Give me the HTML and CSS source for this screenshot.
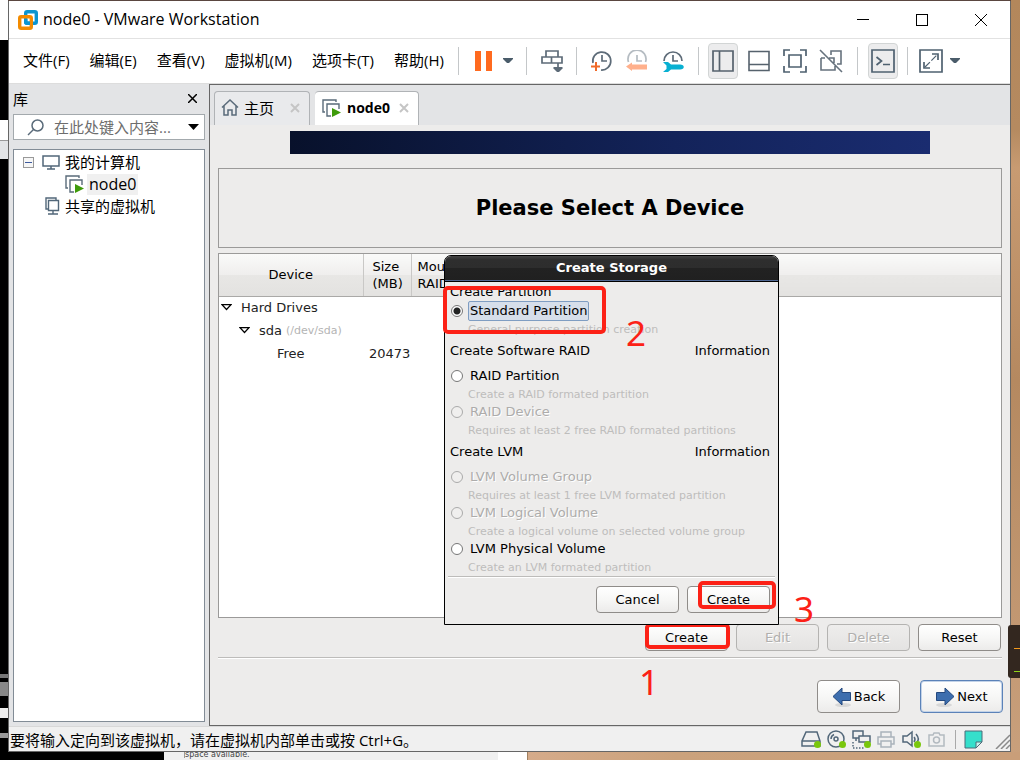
FILE: index.html
```html
<!DOCTYPE html>
<html lang="zh-CN">
<head>
<meta charset="utf-8">
<title>node0 - VMware Workstation</title>
<link rel="stylesheet" href="styles.css">
</head>
<body>
<div class="desktop">
  <div class="edge-top"></div>
  <div class="edge-left"></div>
  <div class="edge-right"></div>
  <div class="edge-bottom">
    <div class="strip-black"></div><div class="strip-light"><span>space available.</span></div><div class="strip-white"></div><div class="strip-wood"></div>
  </div>

  <div class="window">
    <header class="titlebar">
      <svg class="logo" width="20" height="20" viewBox="0 0 20 20" fill="none" stroke-width="3.4"><rect x="7.7" y="1.7" width="10.6" height="11.6" rx="1.5" stroke="#0b95d0"/><rect x="1.7" y="6.7" width="11.6" height="11.6" rx="1.5" stroke="#f38b00"/><path d="M7.7 9v2.8a1.5 1.5 0 0 0 1.5 1.5H12" stroke="#0b95d0"/></svg>
      <h1>node0 - VMware Workstation</h1>
      <div class="window-controls">
        <button type="button" aria-label="最小化"><svg width="14" height="14" stroke="#000"><path d="M1 6.5h12"/></svg></button>
        <button type="button" aria-label="最大化"><svg width="14" height="14" stroke="#000" fill="none"><rect x="1.5" y="1.5" width="11" height="11"/></svg></button>
        <button type="button" aria-label="关闭"><svg width="14" height="14" stroke="#000"><path d="M1 1l12 12M13 1L1 13"/></svg></button>
      </div>
    </header>

    <div class="menubar">
      <nav class="menus">
        <button type="button">文件(F)</button><button type="button">编辑(E)</button><button type="button">查看(V)</button><button type="button">虚拟机(M)</button><button type="button">选项卡(T)</button><button type="button">帮助(H)</button>
      </nav>
      <div class="tools">
        <div class="group pause">
          <button type="button" aria-label="暂停"><svg width="18" height="22"><path d="M0 1h6v20H0zM11 1h6v20h-6z" fill="#ff6a1f"/></svg></button>
          <button type="button" class="drop" aria-label="电源选项"><svg width="10" height="6"><path d="M0 0h10v1L6 5H4L0 1z" fill="#4a5c6a"/></svg></button>
        </div>
        <div class="group single">
          <button type="button" aria-label="发送 Ctrl+Alt+Del"><svg width="22" height="22" viewBox="0 0 22 22" fill="none" stroke="#5d6b78" stroke-width="1.7"><path d="M5 1h12v6H5zM1 7h9.5v6H1zM10.500 7H21v6H10.500z"/><path d="M17 13v6"/><path d="M12.500 17h9v1.500L18 22h-2l-3.500-3.500z" fill="#5d6b78" stroke="none"/></svg></button>
        </div>
        <div class="group clocks">
          <button type="button" aria-label="拍摄快照"><svg width="22" height="22" viewBox="0 0 22 22" fill="none" stroke="#5d6b78" stroke-width="1.7"><path d="M3 13A9 9 0 1 1 11 20M12 5v6h5"/><path d="M6 12v9M1 16.500h9" stroke="#f06a2a" stroke-width="2"/></svg></button>
          <button type="button" aria-label="恢复快照"><svg width="22" height="22" viewBox="0 0 22 22" fill="none" stroke="#b5bcc2" stroke-width="1.7"><path d="M2.500 12a9 9 0 1 1 17 0M11 5v6h5"/><path d="M0 16.500l6-4v2h15v5H6v1.500z" fill="#ffb08c" stroke="none"/></svg></button>
          <button type="button" aria-label="管理快照"><svg width="22" height="22" viewBox="0 0 22 22" fill="none" stroke="#5d6b78" stroke-width="1.7"><path d="M2 11a9 9 0 0 1 18 0M11 5v6h5"/><path d="M1 12h5l3 2.500h9c5 0 5 5 0 5H9L6 22H1l3.500-3v-3.500z" fill="#08b0d2" stroke="none"/></svg></button>
        </div>
        <div class="group views">
          <button type="button" class="on" aria-label="显示库"><svg width="22" height="22" fill="none" stroke="#56626d" stroke-width="1.700"><path d="M1 1h20v20H1zM7.500 1v20"/></svg></button>
          <button type="button" aria-label="缩略图栏"><svg width="22" height="22" fill="none" stroke="#56626d" stroke-width="1.600"><path d="M1 1.500h20v19H1zM1 14.500h20"/></svg></button>
          <button type="button" aria-label="全屏"><svg width="24" height="24" fill="none" stroke="#4f6170" stroke-width="1.700"><path d="M1 7V1h6M17 1h6v6M23 17v6h-6M7 23H1v-6"/><path d="M6 6h12v12H6z"/></svg></button>
          <button type="button" aria-label="Unity"><svg width="24" height="24" fill="none" stroke="#66727d" stroke-width="1.600"><path d="M12 6V2h10v13h-4M2 9v12h14v-4M2 9h4M10 9h5v5M1 1l22 22"/></svg></button>
        </div>
        <div class="group single">
          <button type="button" class="on" aria-label="控制台视图"><svg width="24" height="24" fill="none" stroke="#4f6170" stroke-width="1.700"><path d="M1 1h22v22H1zM5.500 8l5 4-5 4M12 15.500h7"/></svg></button>
        </div>
        <div class="group full">
          <button type="button" aria-label="自由拉伸"><svg width="24" height="24" fill="none" stroke="#4f6170" stroke-width="1.700"><path d="M1 1h22v22H1zM13 5h6v6M5 13v6h6"/><path d="M6 18L18 6" stroke-width="1.200" stroke-dasharray="7 2"/></svg></button>
          <button type="button" class="drop" aria-label="拉伸选项"><svg width="10" height="6"><path d="M0 0h10v1L6 5H4L0 1z" fill="#4a5c6a"/></svg></button>
        </div>
      </div>
    </div>

    <div class="workspace">
      <aside class="library">
        <div class="library-head"><h2>库</h2><button type="button" aria-label="关闭库"><svg width="9" height="9" stroke="#000" stroke-width="1.500"><path d="M0 0l9 9M9 0L0 9"/></svg></button></div>
        <div class="search">
          <svg width="17" height="17" fill="none" stroke="#5a6b7a" stroke-width="1.500"><circle cx="10.500" cy="6.500" r="5.500"/><path d="M6.500 10.500L1 16"/></svg>
          <input type="text" aria-label="搜索" placeholder="在此处键入内容...">
          <button type="button" aria-label="搜索选项"><svg width="11" height="6"><path d="M0 0h11L5.500 6z"/></svg></button>
        </div>
        <ul class="tree">
          <li><svg width="11" height="11"><rect x=".5" y=".5" width="10" height="10" fill="#f6f6f6" stroke="#999"/><path d="M2 5.500h7" stroke="#3d5a9e"/></svg><svg class="pc" width="18" height="15" fill="none" stroke="#526779" stroke-width="1.500"><path d="M1 1h16v10H1zM9 11v3M5 14h8"/></svg><span>我的计算机</span></li>
          <li class="child"><svg width="19" height="18" fill="none" stroke="#5a6b7a" stroke-width="1.400"><path d="M3 13H1V1h13v2"/><path d="M9 17H5V5h12v5"/><path d="M10 9l9 4.500-9 4.500z" fill="#3f9b0b" stroke="none"/></svg><span class="picked">node0</span></li>
          <li class="shared"><svg width="15" height="18" fill="none" stroke="#526779" stroke-width="1.400"><path d="M3 12H1V1h10v2M3.500 3.500h10v10h-10zM8 14v3M3 17h10"/></svg><span>共享的虚拟机</span></li>
        </ul>
      </aside>

      <main class="console">
        <div class="tabs">
          <button type="button" class="tab home"><svg width="18" height="17" fill="none" stroke="#5a6b7a" stroke-width="1.500"><path d="M1 8.500L9 1l8 7.500M3 7v9h4v-5h4v5h4V7"/></svg><span>主页</span><svg class="x" width="10" height="10"><path d="M1 1l8 8M9 1L1 9"/></svg></button>
          <button type="button" class="tab current"><svg width="19" height="18" fill="none" stroke="#5a6b7a" stroke-width="1.400"><path d="M3 13H1V1h13v2"/><path d="M9 17H5V5h12v5"/><path d="M10 9l9 4.500-9 4.500z" fill="#3f9b0b" stroke="none"/></svg><span>node0</span><svg class="x" width="10" height="10"><path d="M1 1l8 8M9 1L1 9"/></svg></button>
        </div>

        <div class="guest">
          <div class="banner"></div>
          <h2 class="heading">Please Select A Device</h2>
          <div class="devices">
            <table>
              <colgroup><col class="c-device"><col class="c-size"><col></colgroup>
              <thead><tr><th class="mid">Device</th><th>Size<br>(MB)</th><th>Mount Point/<br>RAID/Volume</th></tr></thead>
              <tbody>
                <tr><td><span class="lv1"><svg width="11" height="7"><path d="M1 .7h9L5.500 5.500z"/></svg>Hard Drives</span></td><td></td><td></td></tr>
                <tr><td><span class="lv2"><svg width="11" height="7"><path d="M1 .7h9L5.500 5.500z"/></svg>sda <small>(/dev/sda)</small></span></td><td></td><td></td></tr>
                <tr><td><span class="lv3">Free</span></td><td>20473</td><td></td></tr>
              </tbody>
            </table>
          </div>
          <div class="actions">
            <span class="marked"><button type="button" class="gtk">Create</button><i class="mark mark-1"></i><b class="num num-1">1</b></span>
            <button type="button" class="gtk" disabled>Edit</button>
            <button type="button" class="gtk" disabled>Delete</button>
            <button type="button" class="gtk">Reset</button>
          </div>
          <div class="wizard">
            <button type="button" class="gtk"><svg width="20" height="20"><ellipse cx="11" cy="18" rx="8" ry="2" fill="#d8d8d8"/><path d="M1 9.500l9-8.500v4.500h8.500v8H10V18z" fill="#3d6eae" stroke="#24497f"/></svg>Back</button>
            <button type="button" class="gtk next"><svg width="20" height="20"><ellipse cx="9" cy="18" rx="8" ry="2" fill="#d8d8d8"/><path d="M19 9.500L10 1v4.500H1.500v8H10V18z" fill="#3d6eae" stroke="#24497f"/></svg>Next</button>
          </div>

          <form class="dialog" role="dialog" aria-label="Create Storage">
            <div class="dialog-title">Create Storage</div>
            <div class="dialog-body">
              <div class="section first">Create Partition</div>
              <label class="opt"><input type="radio" name="kind" checked><span class="focus">Standard Partition</span></label>
              <p>General purpose partition creation</p>
              <div class="section"><span>Create Software RAID</span><span>Information</span></div>
              <label class="opt"><input type="radio" name="kind"><span>RAID Partition</span></label>
              <p>Create a RAID formated partition</p>
              <label class="opt"><input type="radio" name="kind" disabled><span>RAID Device</span></label>
              <p>Requires at least 2 free RAID formated partitions</p>
              <div class="section"><span>Create LVM</span><span>Information</span></div>
              <label class="opt"><input type="radio" name="kind" disabled><span>LVM Volume Group</span></label>
              <p>Requires at least 1 free LVM formated partition</p>
              <label class="opt"><input type="radio" name="kind" disabled><span>LVM Logical Volume</span></label>
              <p>Create a logical volume on selected volume group</p>
              <label class="opt"><input type="radio" name="kind"><span>LVM Physical Volume</span></label>
              <p>Create an LVM formated partition</p>
            </div>
            <div class="dialog-foot">
              <button type="button" class="gtk">Cancel</button>
              <span class="marked"><button type="button" class="gtk">Create</button><i class="mark mark-3"></i><b class="num num-3">3</b></span>
            </div>
            <i class="mark mark-2"></i><b class="num num-2">2</b>
          </form>
        </div>
      </main>
    </div>

    <footer class="status">
      <span class="message">要将输入定向到该虚拟机，请在虚拟机内部单击或按 Ctrl+G。</span>
      <div class="devices-tray">
        <svg width="21" height="19" fill="none" stroke="#526779" stroke-width="1.500"><path d="M5 2h11l3 9v5H1v-5zM1 11h18"/><circle cx="16.500" cy="14.500" r="3.500" fill="#7ac70c" stroke="none"/></svg>
        <svg width="21" height="19" fill="none" stroke="#526779" stroke-width="1.500"><circle cx="10" cy="9" r="8"/><circle cx="10" cy="9" r="2"/><path d="M5 9a5 5 0 0 1 3-4.500"/><circle cx="16.500" cy="14.500" r="3.500" fill="#7ac70c" stroke="none"/></svg>
        <svg width="21" height="19" fill="none" stroke="#526779" stroke-width="1.500"><path d="M8 8H2V1h10v5M8 6h11v6H8zM5 8v3"/><path d="M2 12v6h12" stroke-dasharray="1.500 1.500"/><circle cx="16.500" cy="14.500" r="3.500" fill="#7ac70c" stroke="none"/></svg>
        <svg width="21" height="19" fill="none" stroke="#a9b2ba" stroke-width="1.500"><path d="M5 7V2h10v5M5 14H2V7h16v7h-3M5 11h10v6H5z"/></svg>
        <svg width="21" height="19" fill="none" stroke="#526779" stroke-width="1.500"><path d="M2 6h4l5-4v14l-5-4H2zM13 7q2 2 0 5M15 4q4 5 1 8"/><circle cx="16.500" cy="14.500" r="3.500" fill="#7ac70c" stroke="none"/></svg>
        <svg width="21" height="19" fill="none" stroke="#b3bac0" stroke-width="1.500"><path d="M3 5h4l1-2h5l1 2h4v11H3z"/><circle cx="10.500" cy="10" r="3"/></svg>
        <div class="note"><svg width="19" height="19"><path d="M1 1h17v11l-6 6H1z" fill="#35dfcb" stroke="#4c6b78"/><path d="M18 12h-6v6z" fill="#c7f5ef" stroke="#4c6b78"/></svg></div>
        <svg class="grip" width="15" height="15" stroke="#8a8a8a" stroke-width="1.500"><path d="M1 15L15 1M6 15l9-9M11 15l4-4"/></svg>
      </div>
    </footer>
  </div>
  <div class="gauge"></div>
</div>
</body>
</html>
```
FILE: styles.css
```css
* { box-sizing: border-box; }
body { margin: 0; font-family: "Open Sans", "Noto Sans CJK SC", sans-serif; font-size: 15px; color: #000; }
button { font: inherit; color: inherit; border: 0; background: none; padding: 0; }
h1, h2, p, ul { margin: 0; padding: 0; font-weight: normal; list-style: none; }
svg { flex: none; display: block; }

/* Desktop behind the window */
.desktop { position: relative; height: 100vh; min-height: 760px; display: grid; grid-template: 1px 1fr 8px / 8px 1fr 9px; overflow: hidden; }
.edge-top { grid-area: 1 / 1 / 2 / 4; background: #5a4640; }
.edge-left { grid-area: 1 / 1 / 3 / 2; background: linear-gradient(#fff 40px, #000 40px 120px, #fff 120px 140px, #999 140px 141px, #e2e4e6 141px 159px, #000 159px 674px, #777 674px 678px, #000 678px 682px, #888 682px 696px, #000 696px 708px, #eee 708px 718px, #000 718px 733px, #999 733px 738px, #000 738px); }
.edge-right { grid-area: 1 / 3 / 4 / 4; background: linear-gradient(#b3875b, #b58a60 17%, #c89b72 22%, #b58960 50%, #c9a07c); }
.edge-bottom { grid-area: 3 / 1 / 4 / 4; display: flex; overflow: hidden; }
.strip-black { width: 164px; background: #000; }
.strip-light { width: 334px; background: #f0f0f0; padding-left: 20px; font: 8px/6px "DejaVu Sans", sans-serif; color: #444; overflow: hidden; }
.strip-light span { display: block; border-left: 1px solid #999; }
.strip-white { width: 30px; background: #fff; border-right: 1px solid #a08060; }
.strip-wood { flex: 1; background: linear-gradient(90deg, #d5ab8a, #cba27c 30%, #c99e79); }
.gauge { position: absolute; right: 0; top: 625px; width: 12px; height: 53px; border-radius: 3px 0 0 3px; background: linear-gradient(transparent 23px, #f39a1d 23px 24px, transparent 24px 46px, #8fd31b 46px 47px, transparent 47px) 6px 0 no-repeat, #33271f; }

/* Window frame */
.window { grid-area: 2 / 2 / 3 / 3; display: flex; flex-direction: column; min-width: 0; border: 1px solid #666; border-top: 0; background: #fff; }
.titlebar { display: flex; align-items: center; height: 38px; padding-left: 9px; border-bottom: 1px solid #e2e2e2; }
.titlebar h1 { flex: 1; margin-left: 5px; font-size: 16px; line-height: 20px; padding-bottom: 1px; }
.window-controls { display: flex; }
.window-controls button { width: 59px; display: grid; place-items: center; }

.menubar { display: flex; height: 45px; border-bottom: 1px solid #ddd; }
.menus { display: flex; align-items: center; gap: 20px; width: 449px; padding-left: 14px; padding-bottom: 4px; }
.menus button { white-space: nowrap; }
.tools { display: flex; align-items: center; }
.group { display: flex; align-items: center; height: 28px; border-left: 1px solid #c4c7c9; }
.group button { display: grid; place-items: center; width: 30px; height: 36px; margin: 0 3px; border-radius: 4px; }
.group .on { background: #ececed; border: 1px solid #d2d5d5; }
.group .drop { width: 12px; margin: 0; }
.pause { width: 68px; padding-left: 7px; }
.single { width: 50px; justify-content: center; }
.clocks { width: 122px; padding-left: 6px; }
.views { width: 159px; padding-left: 6px; }
.full { padding-left: 5px; }

.workspace { flex: 1; display: flex; min-height: 0; background: #e3e4e6; }

/* Library */
.library { width: 200px; padding: 0 4px 4px; display: flex; flex-direction: column; }
.library-head { display: flex; align-items: center; justify-content: space-between; height: 30px; padding-right: 8px; padding-bottom: 2px; }
.library-head h2 { font-size: 15px; }
.search { display: flex; align-items: center; height: 26px; padding-left: 13px; padding-right: 5px; border: 1px solid #a3a9ad; background: #fff; }
.search input { flex: 1; min-width: 0; margin-left: 10px; padding: 0; border: 0; outline: 0; font: inherit; background: none; }
.search input::placeholder { color: #6d6d6d; opacity: 1; }
.tree { flex: 1; margin-top: 9px; padding-top: 1px; border: 1px solid #828c96; background: #fff; }
.tree li { display: flex; align-items: center; height: 22px; padding-left: 9px; }
.tree .pc { margin-left: 8px; }
.tree span { margin-left: 5px; line-height: 21px; }
.tree .child { padding-left: 51px; }
.tree .child span { margin-left: 3px; padding: 0 2px; font-size: 16px; }
.tree .shared { padding-left: 31px; }
.picked { background: #f0f0f0; }

/* Console tabs */
.console { flex: 1; min-width: 0; display: flex; flex-direction: column; border: 1px solid #666; border-right: 0; }
.tabs { display: flex; align-items: flex-end; gap: 5px; height: 40px; padding-left: 4px; }
.tab { display: flex; align-items: center; height: 34px; padding-left: 7px; padding-bottom: 2px; border: 1px solid #b0b3b6; border-bottom: 0; border-radius: 4px 4px 0 0; background: #e9eaec; }
.home { width: 96px; }
.tab span { flex: 1; margin-left: 6px; text-align: left; }
.home span { margin-left: 5px; }
.home { padding-left: 6px; }
.current { width: 104px; border-left: 0; background: #fff; font-weight: bold; font-size: 14px; }
.tab .x { margin-right: 9px; stroke: #c5c5c5; stroke-width: 2; }

/* Guest screen */
.guest { position: relative; flex: 1; display: flex; flex-direction: column; padding: 6px 8px 12px; background: #edeceb; font-family: "DejaVu Sans", sans-serif; font-size: 13px; }
.banner { flex: none; height: 23px; margin: 0 72px; background: linear-gradient(90deg, #08112b, #13235a 60%, #1a2c70); }
.heading { display: grid; place-items: center; flex: none; height: 80px; margin-top: 14px; border: 1px solid #9b9a99; font-size: 21px; font-weight: bold; }
.devices { flex: 1; margin-top: 5px; border: 1px solid #9b9a99; background: #fff; }
table { width: 100%; table-layout: fixed; border-collapse: collapse; }
.c-device { width: 144px; }
.c-size { width: 48px; }
th { height: 42px; padding: 0 6px 0 9px; font-weight: normal; text-align: left; line-height: 17px; background: linear-gradient(#fafaf9, #efeeed 50%, #e8e7e5 50%, #e3e2e0); border-bottom: 1px solid #aaa9a7; border-right: 1px solid #c9c8c6; }
th:last-child { padding-left: 6px; border-right: 0; }
th.mid { text-align: center; padding: 0; }
td { height: 23px; padding: 0; color: #222; }
td + td { padding-left: 6px; }
td span { display: flex; align-items: center; }
td svg { fill: #fff; stroke: #000; stroke-width: 1.2; }
.lv1 { padding-left: 2px; gap: 9px; }
.lv2 { padding-left: 20px; gap: 9px; }
.lv3 { padding-left: 58px; }
.lv2 small { margin-left: -5px; font-size: 11px; color: #b4b4b4; }

.gtk { width: 83px; height: 27px; display: flex; align-items: center; justify-content: center; border: 1px solid #8f8c89; border-radius: 4px; background: linear-gradient(#fff, #f7f7f6 50%, #ecebea); }
.gtk:disabled { color: #b0afad; text-shadow: 1px 1px #fff; border-color: #b4b3b1; background: linear-gradient(#eeedec, #e4e3e2); }
.marked { position: relative; }
.actions { display: flex; justify-content: flex-end; gap: 8px; padding: 6px 1px 6px 0; border-bottom: 1px solid #bdbcba; box-shadow: 0 1px #fff; }
.wizard { display: flex; justify-content: flex-end; gap: 20px; margin-top: 22px; margin-right: -1px; }
.wizard .gtk { height: 33px; gap: 2px; }
.wizard .next { border-color: #5b82b8; box-shadow: inset 0 0 0 1px #c3d3e8; }

/* Create Storage dialog */
.dialog { position: absolute; left: calc(50% - 166px); top: 130px; width: 335px; border: 1px solid #000; border-radius: 7px 7px 0 0; background: #edeceb; }
.dialog-title { height: 26px; line-height: 24px; text-align: center; font-weight: bold; color: #fff; background: linear-gradient(#444, #2e2e2e 15%, #2d2d2d 50%, #222 50%, #202020); border-bottom: 1px solid #000; border-radius: 6px 6px 0 0; box-shadow: inset 0 -1px #4e6691; }
.dialog-body { margin: 0 3px; padding: 0 3px; border-bottom: 1px solid #bdbcba; box-shadow: 0 1px #fff; }
.section { display: flex; justify-content: space-between; height: 29px; line-height: 27px; padding-right: 2px; margin-left: -1px; }
.section.first { height: 19px; line-height: 19px; }
.opt { display: flex; align-items: center; height: 20px; gap: 5px; }
.opt input { appearance: none; flex: none; width: 12px; height: 12px; margin: 0; border: 1px solid #777; border-radius: 50%; background: #fff; }
.opt input:checked { background: radial-gradient(#222 3px, #fff 4px); }
.opt input:disabled { border-color: #aaa; background: #f0efee; }
.opt span { padding: 0 1px; border: 1px solid transparent; line-height: 18px; }
.opt .focus { border-color: #7f9dc2; border-radius: 2px; background: #d6deea; }
.opt input:disabled + span { color: #adacab; text-shadow: 1px 1px #fff; }
.dialog-body p { height: 16px; padding-top: 2px; padding-left: 17px; line-height: 14px; font-size: 11px; color: #bebdbc; white-space: nowrap; }
.dialog-body p:last-child { height: 17px; }
.dialog-foot { display: flex; justify-content: flex-end; gap: 8px; padding: 9px 8px 11px 0; }

/* Red annotations */
.mark { position: absolute; border: 4px solid #fc2116; border-radius: 5px; pointer-events: none; }
.mark-1 { left: 0; top: -1px; width: 85px; height: 26px; }
.mark-2 { left: -2px; top: 30px; width: 163px; height: 48px; }
.mark-3 { left: 11px; top: -5px; width: 78px; height: 28px; }
.num { position: absolute; font: 35px/35px "Noto Sans", sans-serif; color: #fc2116; }
.num-1 { left: -6px; top: 40px; }
.num-2 { left: 181px; top: 59px; }
.num-3 { left: 107px; top: 5px; }

/* Status bar */
.status { display: flex; align-items: center; justify-content: space-between; height: 25px; border-top: 1px solid #d8d8d8; background: #f0f0f0; }
.message { padding-left: 1px; white-space: nowrap; }
.devices-tray { display: flex; align-items: center; gap: 4px; }
.note { width: 36px; padding-left: 8px; margin-left: 4px; border-left: 1px solid #a9a9a9; }
.grip { align-self: flex-end; }
```
